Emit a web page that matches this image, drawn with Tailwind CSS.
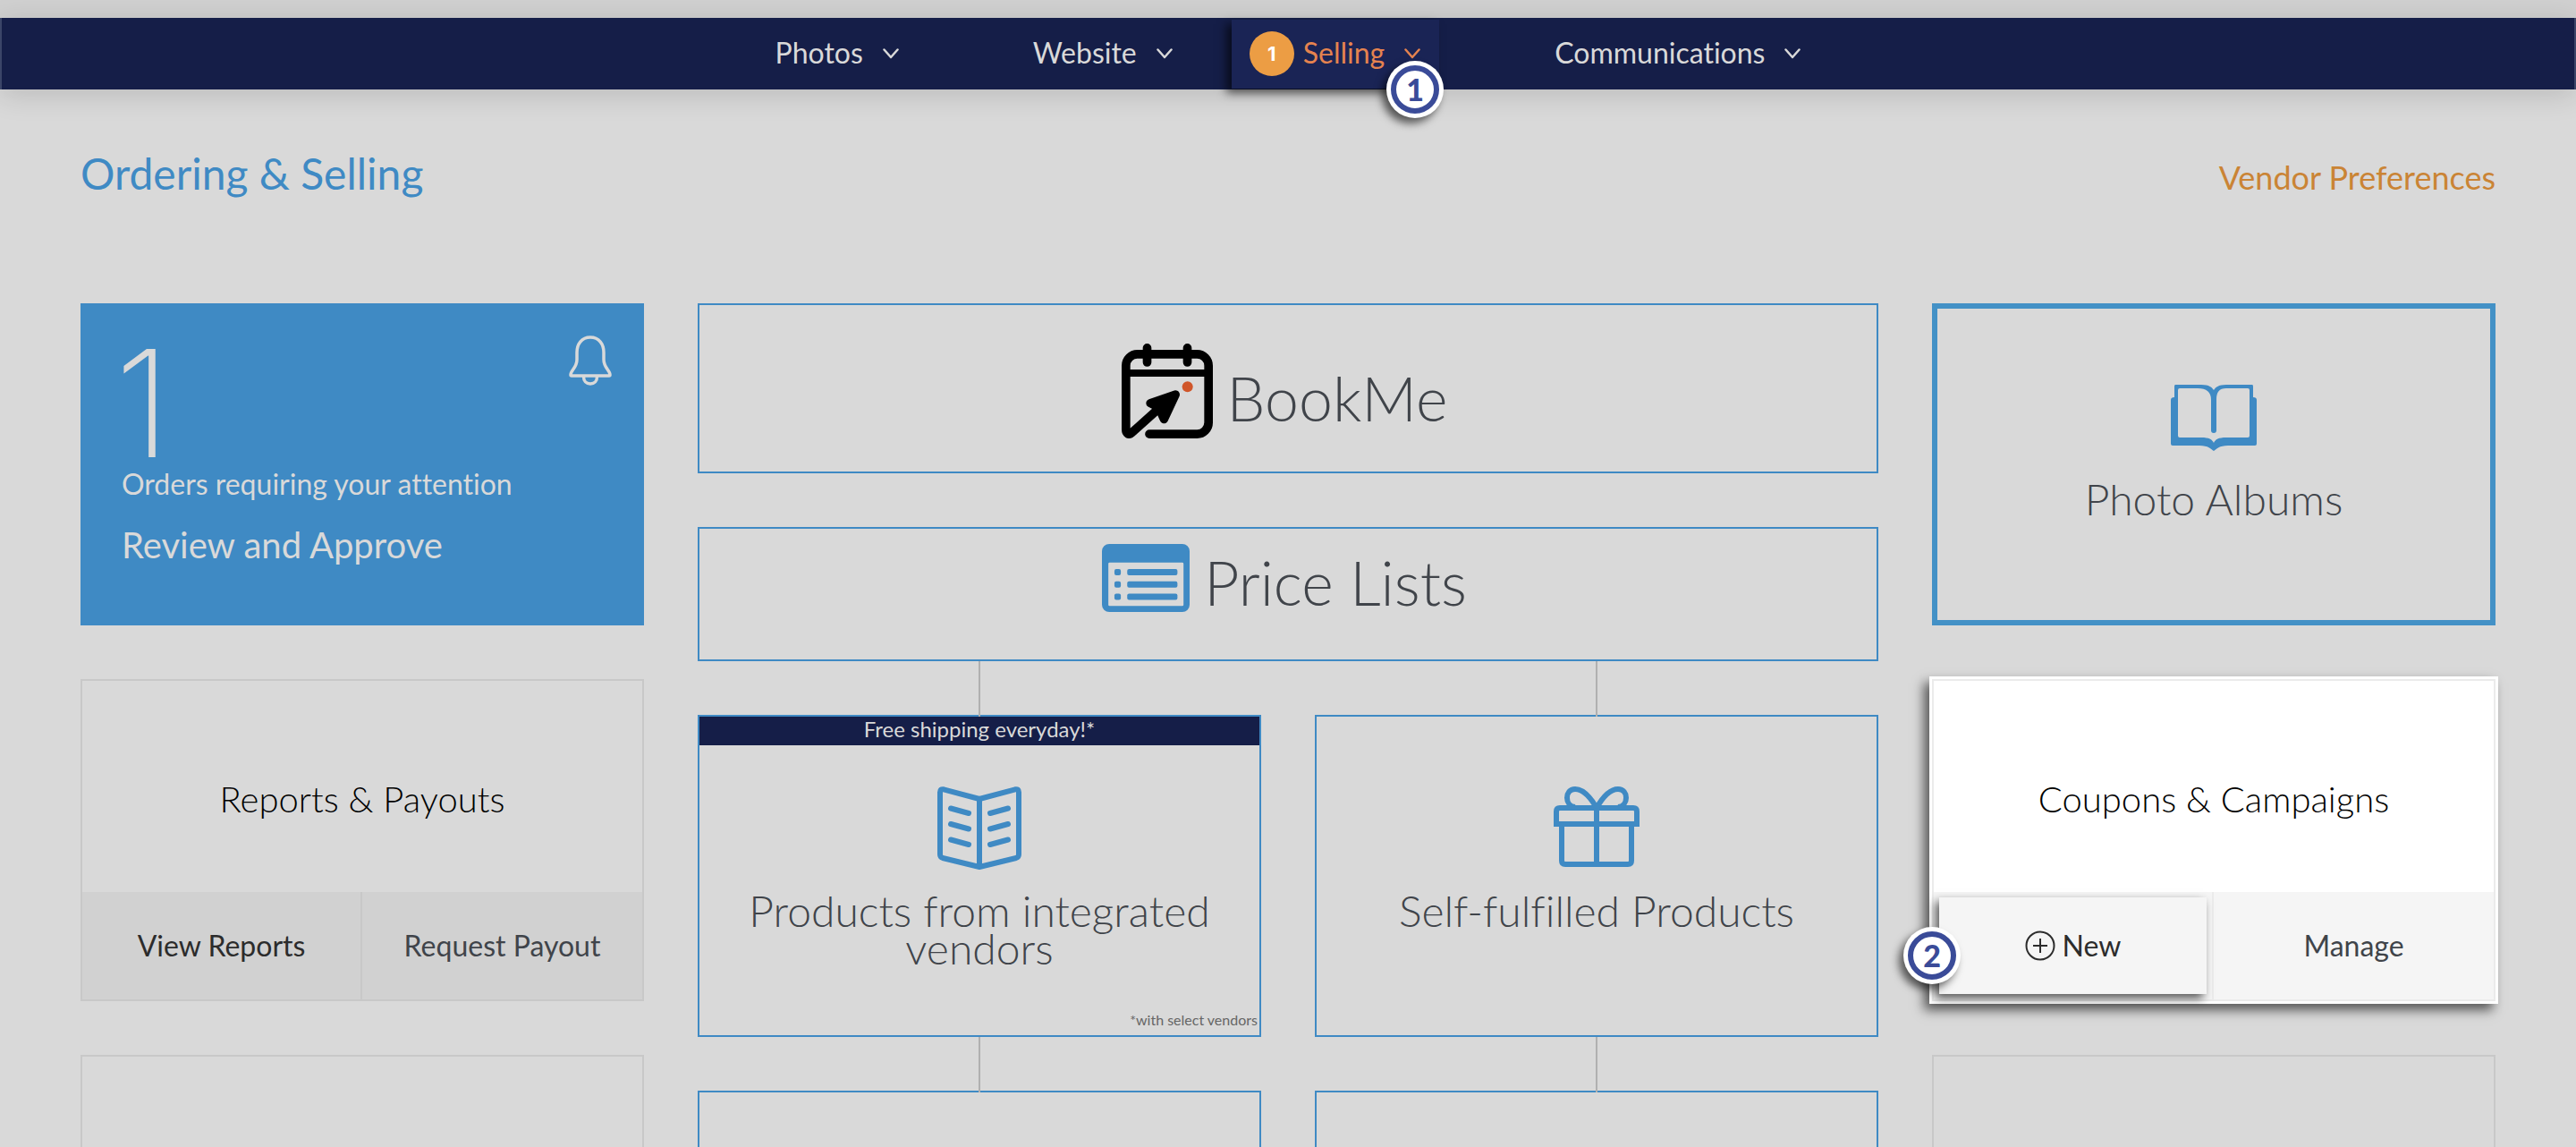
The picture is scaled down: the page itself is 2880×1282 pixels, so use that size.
<!DOCTYPE html>
<html lang="en">
<head>
    <meta charset="UTF-8">
    <meta name="viewport" content="width=device-width, initial-scale=1.0">
    <title>Ordering &amp; Selling</title>
    <script src="https://cdn.jsdelivr.net/npm/@tailwindcss/browser@4"></script>
</head>
<body class="h-screen overflow-hidden bg-[#d9d9d9] font-['Lato','Open_Sans',sans-serif] text-[#40444a] [font-variant-ligatures:none]">
    <!-- Top strip -->
    <div class="h-5 bg-[#d0d0d0]"></div>

    <!-- Navigation -->
    <nav class="relative flex h-20 items-center justify-center gap-[150px] border-x-2 border-[#3b4568] bg-[#151e48] text-[32px] text-[#d9d9d9] shadow-[0_6px_32px_rgba(0,0,0,0.14)]">
        <button class="flex items-center gap-[22px]">
            <span class="pb-0.5">Photos</span>
            <svg class="h-3 w-[18px]" viewBox="0 0 18 12" fill="none" stroke="currentColor" stroke-width="2.5" stroke-linecap="round" stroke-linejoin="round"><path d="M1.5 1.5 9 10l7.5-8.5"/></svg>
        </button>
        <button class="flex items-center gap-[22px]">
            <span class="pb-0.5">Website</span>
            <svg class="h-3 w-[18px]" viewBox="0 0 18 12" fill="none" stroke="currentColor" stroke-width="2.5" stroke-linecap="round" stroke-linejoin="round"><path d="M1.5 1.5 9 10l7.5-8.5"/></svg>
        </button>
        <button class="relative -mr-[21px] -ml-[84px] flex h-[77px] items-center gap-[22px] bg-[#1a2455] pr-[21px] pl-5 text-[#e5834f] shadow-[-6px_5px_10px_rgba(0,0,0,0.6)]">
            <span class="flex items-center gap-2.5">
                <span class="flex size-[50px] items-center justify-center rounded-full bg-[#ec9d44] font-['Inter',sans-serif] text-[22px] font-bold text-white">1</span>
                <span class="pb-0.5">Selling</span>
            </span>
            <svg class="h-3 w-[18px]" viewBox="0 0 18 12" fill="none" stroke="currentColor" stroke-width="2.5" stroke-linecap="round" stroke-linejoin="round"><path d="M1.5 1.5 9 10l7.5-8.5"/></svg>
            <!-- Step marker 1 -->
            <span class="absolute -right-[5px] -bottom-[33px] flex size-16 items-center justify-center rounded-full bg-white shadow-[-5px_6px_10px_rgba(0,0,0,0.6)]">
                <span class="flex size-[54px] items-center justify-center rounded-full border-6 border-[#3a4b98] text-[34px] leading-none font-black text-[#3a4b98]">1</span>
            </span>
        </button>
        <button class="flex items-center gap-[22px]">
            <span class="pb-0.5">Communications</span>
            <svg class="h-3 w-[18px]" viewBox="0 0 18 12" fill="none" stroke="currentColor" stroke-width="2.5" stroke-linecap="round" stroke-linejoin="round"><path d="M1.5 1.5 9 10l7.5-8.5"/></svg>
        </button>
    </nav>

    <main class="px-[90px] pt-[70px]">
        <header class="flex h-[169px] items-start justify-between">
            <h1 class="text-[48px] leading-[48px] text-[#3f8ac4]">Ordering &amp; Selling</h1>
            <a href="#" class="text-[36px] leading-[56px] text-[#ca8435]">Vendor Preferences</a>
        </header>

        <div class="grid grid-cols-4 gap-x-[60px]">
            <!-- Left column -->
            <div class="flex flex-col gap-[60px]">
                <section class="relative h-[360px] bg-[#3f8ac4] px-[46px] pt-[52px] text-[#d9d9d9]">
                    <svg class="absolute top-9 right-9 h-14 w-12" viewBox="0 0 48 56" fill="none" stroke="currentColor" stroke-width="3.5" stroke-linejoin="round">
                        <path d="M24 2C14 2 9 10 9 19v8c0 9-7 12-7 17 0 1 0 1 1 1h42c1 0 1 0 1-1 0-5-7-8-7-17v-8C39 10 34 2 24 2Z"/>
                        <path d="M16.5 46c0 5 3 8 7.5 8s7.5-3 7.5-8"/>
                    </svg>
                    <p class="-ml-2 font-['Inter',sans-serif] text-[166px] leading-[120px] font-extralight">1</p>
                    <p class="mt-2.5 text-[32px] leading-10">Orders requiring your attention</p>
                    <a href="#" class="mt-6 block text-[40px] leading-12">Review and Approve</a>
                </section>

                <section class="flex h-[360px] flex-col border-2 border-[#c8c8c8]">
                    <h2 class="flex flex-1 items-center justify-center pt-7 text-[40px] font-light text-black">Reports &amp; Payouts</h2>
                    <div class="grid h-[120px] grid-cols-2 bg-[#d1d1d1] text-[32px]">
                        <button class="border-r-2 border-[#c8c8c8] text-[#2c2c2c]">View Reports</button>
                        <button>Request Payout</button>
                    </div>
                </section>

                <section class="h-[360px] border-2 border-[#c8c8c8]"></section>
            </div>

            <!-- Middle columns -->
            <div class="col-span-2">
                <a href="#" class="flex h-[190px] items-end justify-center gap-4 border-2 border-[#3f8ac4] pr-2 pb-[37px]">
                    <svg class="h-[106px] w-[102px]" viewBox="0 0 306 318" fill="none" stroke="#000" stroke-width="29" stroke-linecap="round" stroke-linejoin="round">
                        <path d="M93 303.5H253a38.5 38.5 0 0 0 38.5-38.5V74A38.5 38.5 0 0 0 253 35.5H53A38.5 38.5 0 0 0 14.5 74V288C14.5 302 24 308 34 299L122 220"/>
                        <path d="M15 99H291" stroke-width="24" stroke-linecap="butt"/>
                        <path d="M85.5 14.5V63M220.5 14.5V63"/>
                        <path d="M181 171 96 200l28 14 18 40Z" fill="#000" stroke-width="28"/>
                        <circle cx="221" cy="145" r="18" fill="#d0562a" stroke="none"/>
                    </svg>
                    <span class="text-[68px] leading-[90px] font-light">BookMe</span>
                </a>

                <a href="#" class="mt-[60px] flex h-[150px] items-end justify-center gap-4 border-2 border-[#3f8ac4] pr-2 pb-[53px]">
                    <svg class="h-[76px] w-[98px]" viewBox="0 0 288 226" preserveAspectRatio="none" fill="#3f8ac4">
                        <path fill-rule="evenodd" d="M24 0H264a24 24 0 0 1 24 24V202a24 24 0 0 1-24 24H24a24 24 0 0 1-24-24V24A24 24 0 0 1 24 0ZM25 62a4 4 0 0 0-4 4V202a4 4 0 0 0 4 4H264a4 4 0 0 0 4-4V66a4 4 0 0 0-4-4Z"/>
                        <rect x="41" y="83" width="21" height="21" rx="6"/><rect x="83" y="83" width="165" height="21" rx="6"/>
                        <rect x="41" y="124" width="21" height="21" rx="6"/><rect x="83" y="124" width="165" height="21" rx="6"/>
                        <rect x="41" y="165" width="21" height="21" rx="6"/><rect x="83" y="165" width="165" height="21" rx="6"/>
                    </svg>
                    <span class="text-[68px] leading-[66px] font-light">Price Lists</span>
                </a>

                <div class="grid grid-cols-2 gap-x-[60px]">
                    <div>
                        <div class="relative mx-auto -mb-0.5 h-[62px] w-0.5 bg-[#b0b0b0]"></div>
                        <a href="#" class="flex h-[360px] flex-col items-center border-2 border-[#3f8ac4]">
                            <span class="h-8 self-stretch bg-[#151e48] text-center text-[24px] leading-7 text-[#d9d9d9]">Free shipping everyday!*</span>
                            <svg class="mt-[46px] h-[94px] w-[94px] shrink-0" viewBox="0 0 94 94" fill="none" stroke="#3f8ac4" stroke-width="6" stroke-linecap="round" stroke-linejoin="round">
                                <path d="M47 14 7 3.3Q3 2.5 3 6.5V76Q3 79 6 80L47 90 88 80Q91 79 91 76V6.5Q91 2.5 87 3.3ZM47 14V90"/>
                                <path d="M15 24.5 35 30M15 42 35 47.5M15 59.5 35 65M79 24.5 59 30M79 42 59 47.5M79 59.5 59 65"/>
                            </svg>
                            <span class="mt-6 px-8 text-center text-[48px] leading-[42px] font-light">Products from integrated vendors</span>
                            <small class="mt-auto self-end pr-0.5 pb-[7px] text-[16px] leading-5 text-[#666]">*with select vendors</small>
                        </a>
                        <div class="relative mx-auto -mb-0.5 h-[62px] w-0.5 bg-[#b0b0b0]"></div>
                        <section class="h-[360px] border-2 border-[#3f8ac4]"></section>
                    </div>
                    <div>
                        <div class="relative mx-auto -mb-0.5 h-[62px] w-0.5 bg-[#b0b0b0]"></div>
                        <a href="#" class="flex h-[360px] flex-col items-center border-2 border-[#3f8ac4] pt-[78px]">
                            <svg class="h-[94px] w-24 shrink-0" viewBox="0 0 96 94" fill="none" stroke="#3f8ac4" stroke-width="6">
                                <path d="M3 42V28Q3 24 7 24H89Q93 24 93 28V42ZM9 42V83Q9 87 13 87H83Q87 87 87 83V42M48 24V87"/>
                                <path d="M48 24C40 10 32 3 24 3 12 3 12 22 24 23M48 24C56 10 64 3 72 3 84 3 84 22 72 23"/>
                            </svg>
                            <span class="mt-6 text-center text-[48px] leading-[42px] font-light">Self-fulfilled Products</span>
                        </a>
                        <div class="relative mx-auto -mb-0.5 h-[62px] w-0.5 bg-[#b0b0b0]"></div>
                        <section class="h-[360px] border-2 border-[#3f8ac4]"></section>
                    </div>
                </div>
            </div>

            <!-- Right column -->
            <div class="flex flex-col gap-[60px]">
                <a href="#" class="flex h-[360px] flex-col items-center border-6 border-[#4391c6] pt-[85px]">
                    <svg class="h-[74px] w-24" viewBox="0 0 96 74" fill="#3f8ac4">
                        <path fill-rule="evenodd" d="M5 0H34C43 0 46 3 48 6 50 3 53 0 62 0H91Q92 0 92 2V14Q96 14 96 17V66Q96 68 94 68H64C54 68 51 72 48 74 45 72 42 68 32 68H2Q0 68 0 66V17Q0 14 4 14V2Q4 0 5 0ZM8 6V57Q8 59 10 59H34C43 59 46 61 48 65 50 61 53 59 62 59H86Q88 59 88 57V6Q88 4 86 4H62C54 4 51 8 51 17V51Q51 54 48 54 45 54 45 51V17C45 8 40 4 30 4H10Q8 4 8 6Z"/>
                    </svg>
                    <span class="mt-[30px] text-[48px] leading-12 font-light">Photo Albums</span>
                </a>

                <section class="relative flex h-[360px] flex-col border-2 border-[#ebebeb] bg-white shadow-[0_0_0_3px_#fff,-6px_7px_12px_3px_rgba(0,0,0,0.6)]">
                    <h2 class="flex flex-1 items-center justify-center pt-7 text-[40px] font-light text-black">Coupons &amp; Campaigns</h2>
                    <div class="grid h-[120px] grid-cols-2 bg-[#f5f5f5] text-[32px]">
                        <div class="flex border-r-2 border-[#ebebeb] p-1.5">
                            <button class="flex flex-1 items-center justify-center gap-2 bg-[#f5f5f5] text-[#2c2c2c] shadow-[-4px_5px_10px_rgba(0,0,0,0.65)]">
                                <svg class="size-[34px]" viewBox="0 0 34 34" fill="none" stroke="currentColor" stroke-width="2"><circle cx="17" cy="17" r="15.5"/><path d="M17 9V25M9 17H25"/></svg>
                                <span>New</span>
                            </button>
                        </div>
                        <button>Manage</button>
                    </div>
                    <!-- Step marker 2 -->
                    <span class="absolute top-[275px] -left-[34px] flex size-16 items-center justify-center rounded-full bg-white shadow-[-5px_6px_10px_rgba(0,0,0,0.6)]">
                        <span class="flex size-[54px] items-center justify-center rounded-full border-6 border-[#3a4b98] text-[34px] leading-none font-black text-[#3a4b98]">2</span>
                    </span>
                </section>

                <section class="h-[360px] border-2 border-[#c8c8c8]"></section>
            </div>
        </div>
    </main>
</body>
</html>
